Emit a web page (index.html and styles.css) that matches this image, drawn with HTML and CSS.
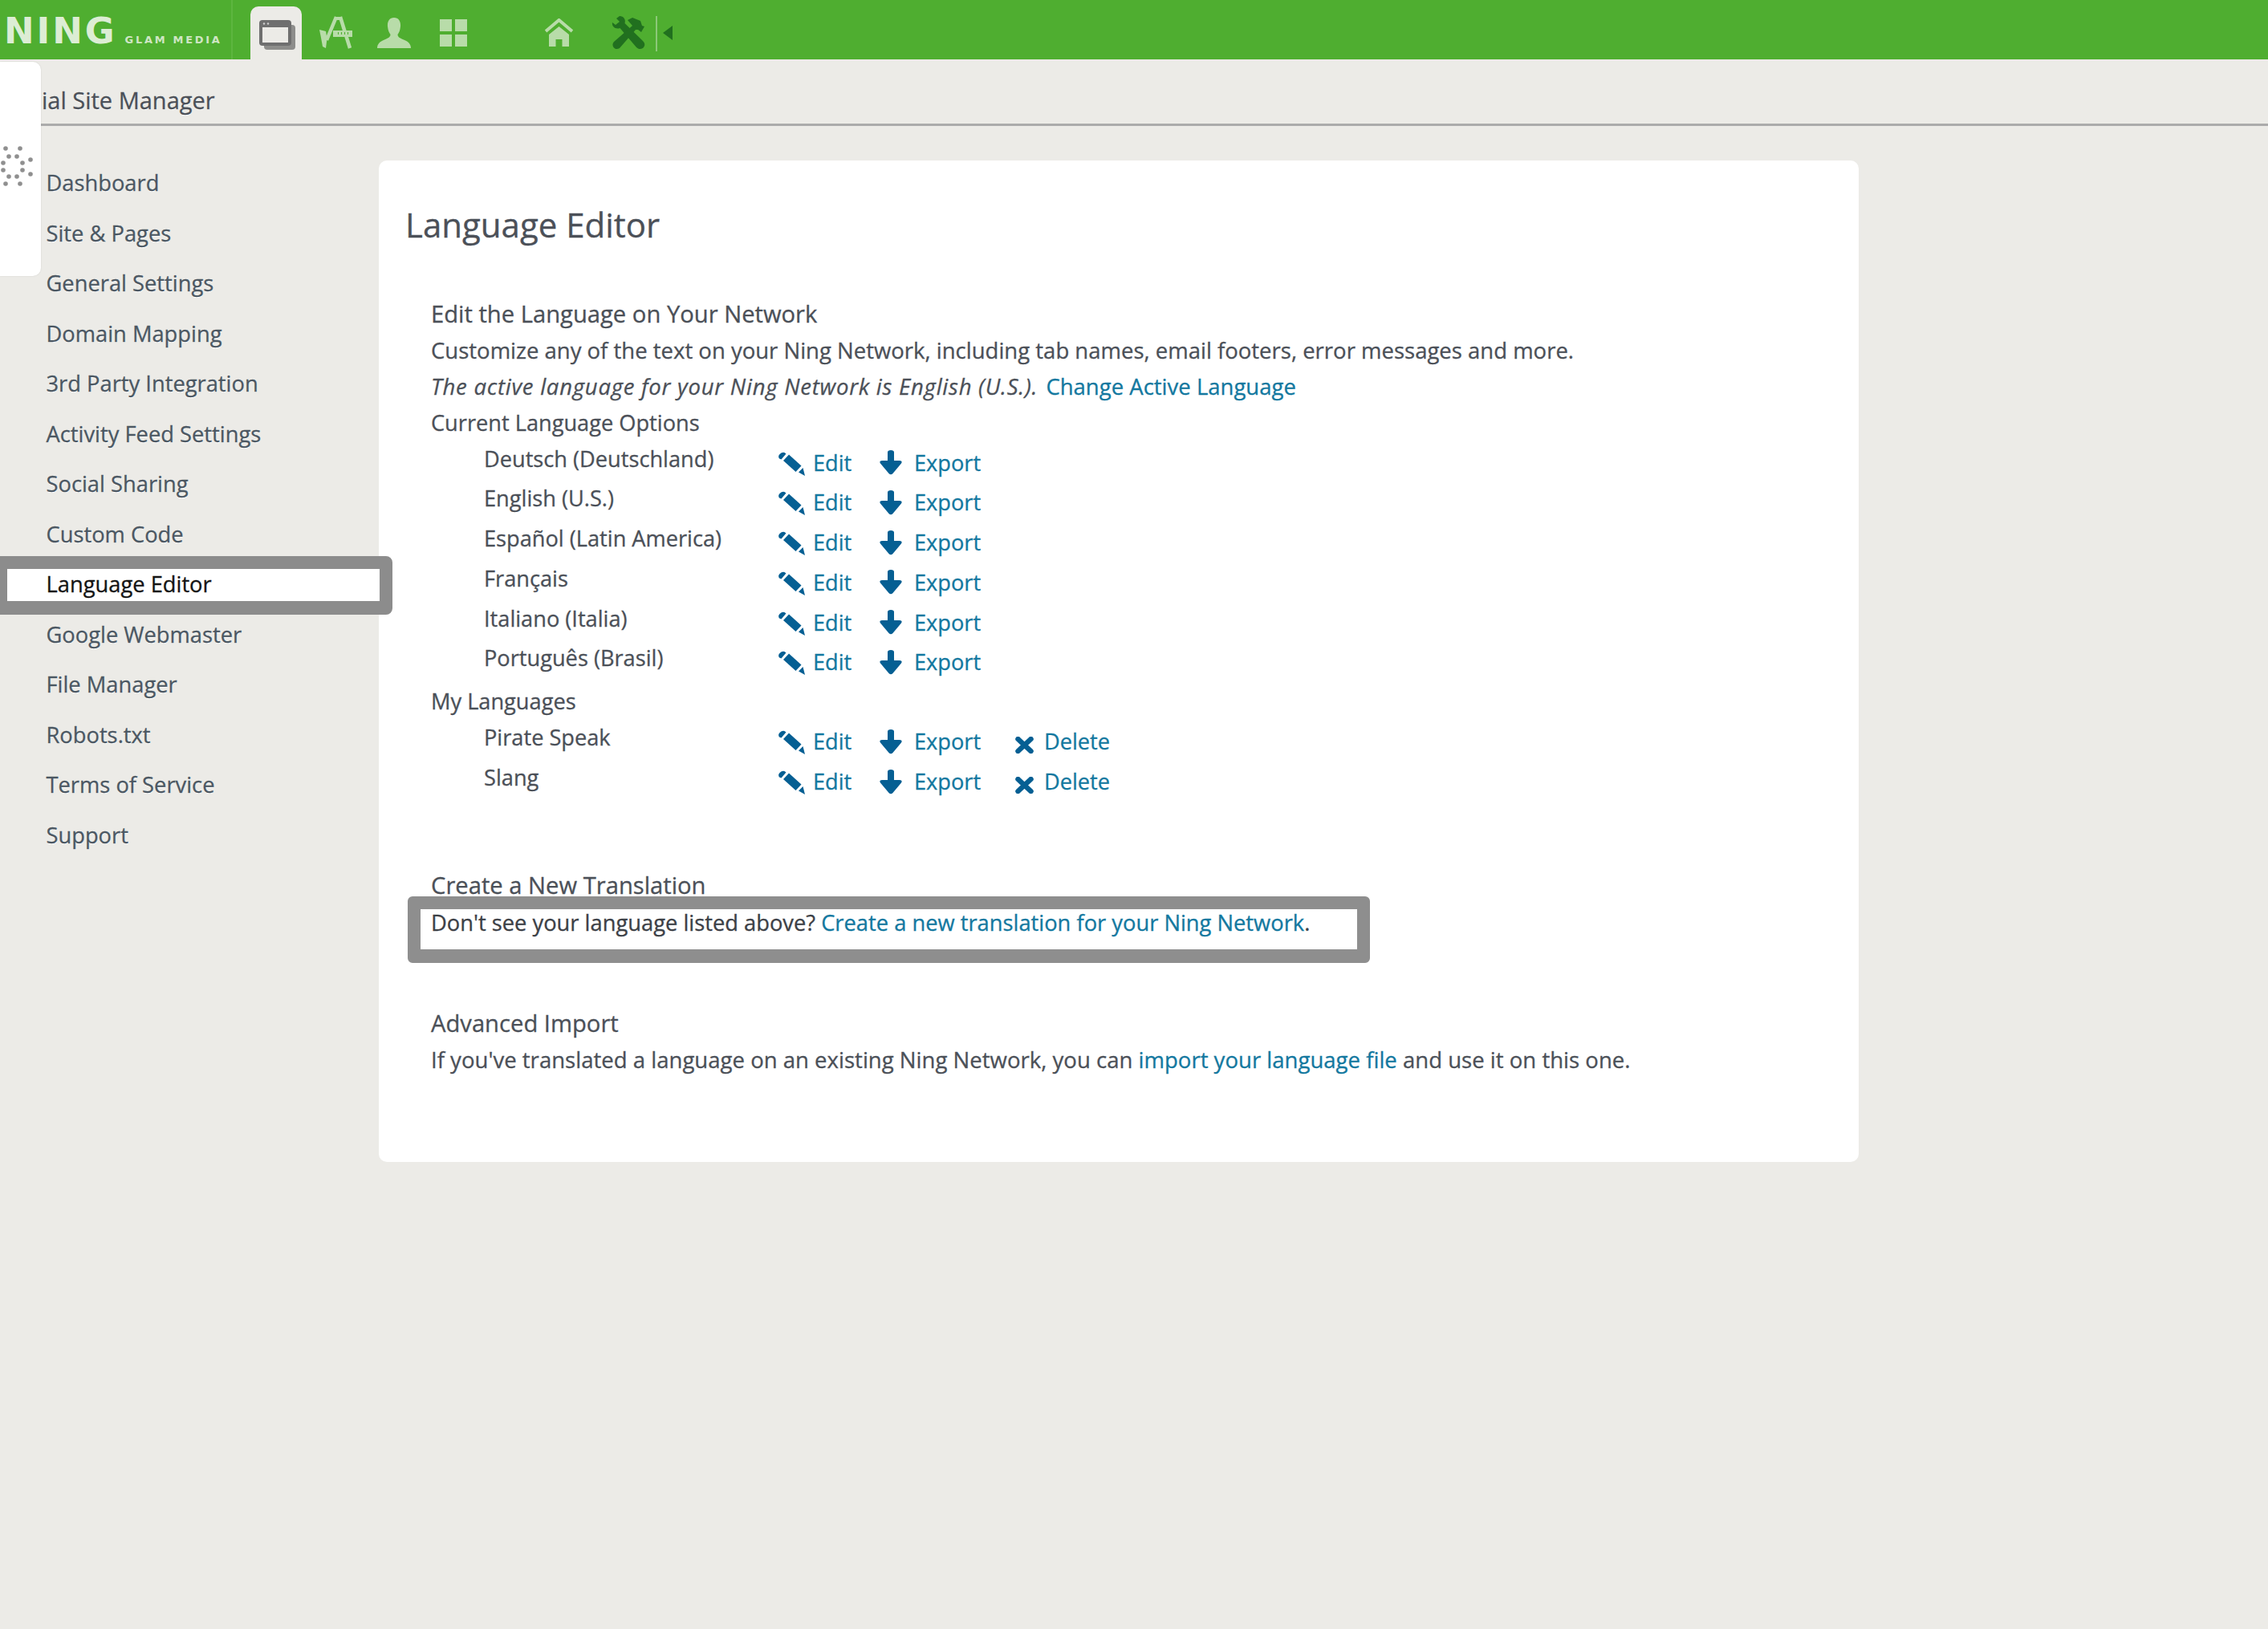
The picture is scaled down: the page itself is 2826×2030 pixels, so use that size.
FILE: index.html
```html
<!DOCTYPE html>
<html lang="en">
<head>
<meta charset="utf-8">
<title>Language Editor</title>
<link rel="stylesheet" href="styles.css">
</head>
<body>
<svg class="defs" width="0" height="0" aria-hidden="true">
  <symbol id="i-edit" viewBox="0 0 33 30">
    <path d="M1 8.500Q-1 5.500 1.500 3Q4.500 0 7.500 1L9.500 2.500L3.500 9.500Z"/>
    <path d="M6 11L13 3.500L28.500 17.500L21.500 25Z"/>
    <path d="M25 25.500L30.500 20L33 30Z"/>
  </symbol>
  <symbol id="i-export" viewBox="0 0 28 31">
    <path d="M10 2.500Q10 0 14 0Q18 0 18 2.500V13H25Q29 13 27 16.500L16.500 29Q14 31.500 11.500 29L1 16.500Q-1 13 3 13H10Z"/>
  </symbol>
  <symbol id="i-delete" viewBox="0 0 23 21">
    <path d="M3.500 3L19.500 18M19.500 3L3.500 18" fill="none" stroke="currentColor" stroke-width="6.500" stroke-linecap="round"/>
  </symbol>
</svg>

<header class="topbar">
  <div class="brand">
    <span class="brand-name">NING</span>
    <span class="brand-sub">GLAM MEDIA</span>
  </div>
  <nav class="tabs">
    <a class="tab tab-active">
      <svg class="ic-window" viewBox="0 0 45 37">
        <rect x="6" y="6" width="39" height="31" rx="4" fill="#8d8d8b"/>
        <rect x="0" y="0" width="40" height="32" rx="4" fill="#6f6f6f"/>
        <rect x="4" y="9" width="32" height="19" fill="#ecebe7"/>
        <circle cx="6" cy="4.500" r="1.200" fill="#cfcfcf"/>
        <circle cx="11" cy="4.500" r="1.200" fill="#cfcfcf"/>
      </svg>
    </a>
    <svg class="ic-app" viewBox="0 0 43 41">
      <path d="M22 1L10 30M27 1L39 40" fill="none" stroke="#b8dca9" stroke-width="4.500"/>
      <path d="M20 1H29V5H20Z" fill="#b8dca9"/>
      <path d="M18 18H42V26H18Z" fill="#b8dca9"/>
      <path d="M1 17L9 19L10.500 28L9 40L5 38L3 27Z" fill="#b8dca9"/>
      <path d="M24 20h1v3h-1zM28 20h1v3h-1zM32 20h1v3h-1zM36 20h1v3h-1z" fill="#4fae30"/>
    </svg>
    <svg class="ic-person" viewBox="0 0 42 38">
      <path d="M21 0C27 0 29.500 5 29 11C28.500 16 27 19 25.500 21C25.500 24 28 25.500 33 27.500C39 30 42 33 42 38H0C0 33 3 30 9 27.500C14 25.500 16.500 24 16.500 21C15 19 13.500 16 13 11C12.500 5 15 0 21 0Z" fill="#b8dca9"/>
    </svg>
    <svg class="ic-grid" viewBox="0 0 34 34">
      <path d="M0 0H15V15H0ZM19 0H34V15H19ZM0 19H15V34H0ZM19 19H34V34H19Z" fill="#b8dca9"/>
    </svg>
    <svg class="ic-home" viewBox="0 0 35 35">
      <path d="M1 16L17.500 2L34 16" fill="none" stroke="#b8dca9" stroke-width="4"/>
      <path d="M17.500 10L30 20V35H21.500V26H13.500V35H5V20Z" fill="#b8dca9"/>
    </svg>
    <svg class="ic-tools" viewBox="0 0 43 42">
      <path d="M1 8L5 11L10 7L6 3L10 0C15 0 18 4 16.500 9L39 31C42 34 42 37 39 40C36 42 33 41 31 39L10.500 15C5 17 0 13 1 8Z" fill="#21701f"/>
      <path d="M20 5L26 2L36 6L38 12L41 13L37 20L33 17L30 17L10 40C7 42 4 41 2.500 39C1 37 1 34 3 32L26 12Z" fill="#21701f"/>
    </svg>
    <span class="tab-rule"></span>
    <span class="tab-caret"></span>
  </nav>
</header>

<aside class="popup">
  <svg class="spinner" viewBox="0 0 42 50" fill="#8f8f8f">
    <circle cx="7" cy="3" r="2.800"/><circle cx="25" cy="3" r="2.800"/>
    <circle cx="11" cy="13" r="2.800"/><circle cx="21" cy="13" r="2.800"/>
    <circle cx="38" cy="17" r="2.800"/><circle cx="28" cy="21" r="2.800"/><circle cx="4" cy="21" r="2.800"/>
    <circle cx="4" cy="30" r="2.800"/><circle cx="28" cy="30" r="2.800"/><circle cx="38" cy="35" r="2.800"/>
    <circle cx="11" cy="38" r="2.800"/><circle cx="21" cy="38" r="2.800"/>
    <circle cx="7" cy="47" r="2.800"/><circle cx="25" cy="47" r="2.800"/>
  </svg>
</aside>

<div class="subhead">ial Site Manager</div>

<div class="layout">
  <ul class="sidenav">
    <li>Dashboard</li>
    <li>Site &amp; Pages</li>
    <li>General Settings</li>
    <li>Domain Mapping</li>
    <li>3rd Party Integration</li>
    <li>Activity Feed Settings</li>
    <li>Social Sharing</li>
    <li>Custom Code</li>
    <li class="active"><span>Language Editor</span></li>
    <li>Google Webmaster</li>
    <li>File Manager</li>
    <li>Robots.txt</li>
    <li>Terms of Service</li>
    <li>Support</li>
  </ul>

  <main class="panel">
    <h1 class="title">Language Editor</h1>
    <section class="body">
      <h2 class="line head">Edit the Language on Your Network</h2>
      <p class="line">Customize any of the text on your Ning Network, including tab names, email footers, error messages and more.</p>
      <p class="line"><em class="active-lang">The active language for your Ning Network is English (U.S.).</em> <a class="link">Change Active Language</a></p>
      <h3 class="line sub">Current Language Options</h3>
      <div class="langs">
        <div class="lang"><span class="lang-name">Deutsch (Deutschland)</span><div class="acts"><a class="act act-edit"><svg><use href="#i-edit"/></svg>Edit</a><a class="act act-export"><svg><use href="#i-export"/></svg>Export</a></div></div>
        <div class="lang"><span class="lang-name">English (U.S.)</span><div class="acts"><a class="act act-edit"><svg><use href="#i-edit"/></svg>Edit</a><a class="act act-export"><svg><use href="#i-export"/></svg>Export</a></div></div>
        <div class="lang"><span class="lang-name">Español (Latin America)</span><div class="acts"><a class="act act-edit"><svg><use href="#i-edit"/></svg>Edit</a><a class="act act-export"><svg><use href="#i-export"/></svg>Export</a></div></div>
        <div class="lang"><span class="lang-name">Français</span><div class="acts"><a class="act act-edit"><svg><use href="#i-edit"/></svg>Edit</a><a class="act act-export"><svg><use href="#i-export"/></svg>Export</a></div></div>
        <div class="lang"><span class="lang-name">Italiano (Italia)</span><div class="acts"><a class="act act-edit"><svg><use href="#i-edit"/></svg>Edit</a><a class="act act-export"><svg><use href="#i-export"/></svg>Export</a></div></div>
        <div class="lang"><span class="lang-name">Português (Brasil)</span><div class="acts"><a class="act act-edit"><svg><use href="#i-edit"/></svg>Edit</a><a class="act act-export"><svg><use href="#i-export"/></svg>Export</a></div></div>
      </div>
      <h3 class="line sub my-head">My Languages</h3>
      <div class="langs">
        <div class="lang"><span class="lang-name">Pirate Speak</span><div class="acts"><a class="act act-edit"><svg><use href="#i-edit"/></svg>Edit</a><a class="act act-export"><svg><use href="#i-export"/></svg>Export</a><a class="act act-delete"><svg><use href="#i-delete"/></svg>Delete</a></div></div>
        <div class="lang"><span class="lang-name">Slang</span><div class="acts"><a class="act act-edit"><svg><use href="#i-edit"/></svg>Edit</a><a class="act act-export"><svg><use href="#i-export"/></svg>Export</a><a class="act act-delete"><svg><use href="#i-delete"/></svg>Delete</a></div></div>
      </div>
      <h2 class="line head create-head">Create a New Translation</h2>
      <p class="callout">Don't see your language listed above? <a class="link">Create a new translation for your Ning Network</a>.</p>
      <h2 class="line head adv-head">Advanced Import</h2>
      <p class="line last-line">If you've translated a language on an existing Ning Network, you can <a class="link">import your language file</a> and use it on this one.</p>
    </section>
  </main>
</div>
</body>
</html>
```

FILE: styles.css
```css
*, *::before { box-sizing: border-box; }
html, body { margin: 0; padding: 0; }
body {
  width: 2826px;
  min-height: 2030px;
  background: #ecebe7;
  color: #4b5058;
  font-family: "Open Sans", "Liberation Sans", sans-serif;
  font-size: 27.500px;
  -webkit-text-stroke: 0.3px;
  position: relative;
  overflow: hidden;
}
.defs { position: absolute; }

.topbar {
  height: 74px;
  background: #4fae30;
  display: flex;
  align-items: stretch;
}
.brand {
  width: 290px;
  flex: none;
  border-right: 2px solid #5db53f;
  padding-left: 5px;
  display: flex;
  align-items: baseline;
  font-family: "DejaVu Sans", sans-serif;
  font-weight: 700;
  -webkit-text-stroke: 0;
}
.brand-name {
  font-size: 45px;
  line-height: 78px;
  letter-spacing: 2.900px;
  color: #dcedd4;
}
.brand-sub {
  margin-left: 10px;
  font-size: 13px;
  letter-spacing: 2.700px;
  color: #cfe6c4;
  white-space: nowrap;
}
.tabs { display: flex; align-items: flex-start; margin-left: 22px; }
.tab {
  width: 64px;
  height: 66px;
  margin-top: 8px;
  background: #ecebe7;
  border-radius: 10px 10px 0 0;
  padding: 17px 0 0 11px;
}
.ic-window { display: block; width: 45px; height: 37px; }
.ic-app { width: 43px; height: 41px; margin: 20px 0 0 21px; }
.ic-person { width: 42px; height: 38px; margin: 22px 0 0 30px; }
.ic-grid { width: 34px; height: 34px; margin: 24px 0 0 36px; }
.ic-home { width: 35px; height: 35px; margin: 23px 0 0 97px; }
.ic-tools { width: 43px; height: 42px; margin: 20px 0 0 48px; }
.tab-rule { width: 2px; height: 44px; margin: 20px 0 0 12px; background: #8cc878; }
.tab-caret {
  margin: 32px 0 0 7px;
  border-style: solid;
  border-width: 9.500px 12px 9.500px 0;
  border-color: transparent #21701f transparent transparent;
}

.popup {
  position: absolute;
  left: 0;
  top: 77px;
  width: 51px;
  height: 267px;
  background: #fff;
  border-radius: 0 10px 10px 0;
  box-shadow: 0 0 2px rgba(0,0,0,.12);
  z-index: 5;
}
.spinner { display: block; width: 42px; height: 50px; margin-top: 105px; }

.subhead {
  height: 83px;
  padding: 29px 0 0 52px;
  font-size: 29px;
  line-height: 44px;
  border-bottom: 3px solid #ababab;
  text-shadow: 0 1px 0 #fff;
}

.layout { display: flex; align-items: flex-start; padding-top: 43px; }

.sidenav {
  list-style: none;
  width: 472px;
  flex: none;
  margin: -3px 0 0;
  padding: 0 0 0 57.500px;
  font-size: 27.300px;
  color: #4b5762;
  position: relative;
  z-index: 2;
}
.sidenav li {
  height: 62.500px;
  line-height: 62.500px;
  text-shadow: 0 1px 0 #fff;
  position: relative;
}
.sidenav .active { color: #141414; text-shadow: none; }
.sidenav .active::before {
  content: "";
  position: absolute;
  left: -57.500px;
  right: -17px;
  top: -4px;
  height: 73px;
  background: #fff;
  border: solid #8c8c8c;
  border-width: 16px 16px 17px 9px;
  border-radius: 0 8px 8px 0;
}
.sidenav .active span { position: relative; }

.panel {
  width: 1844px;
  flex: none;
  background: #fff;
  border-radius: 10px;
  padding: 50px 0 105px 33px;
}
.title {
  margin: 0;
  font-size: 42px;
  line-height: 60px;
  font-weight: 400;
  color: #4b5058;
}
.body { margin: 58.500px 0 0 32px; }
.line {
  margin: 0;
  font-size: 27.500px;
  line-height: 45px;
  font-weight: 400;
  white-space: nowrap;
}
.head { font-size: 29.200px; }
.sub { font-size: 27.200px; }
.active-lang { letter-spacing: 0.750px; margin-right: 3px; }
.last-line { font-size: 27.550px; }
.link { color: #13789f; }

.lang {
  display: grid;
  grid-template-columns: 367px 1fr;
  height: 49.800px;
  padding-left: 66px;
  font-size: 27.200px;
  line-height: 45px;
  white-space: nowrap;
}
.acts { display: flex; padding-top: 5px; color: #13789f; }
.act { display: flex; align-items: center; height: 45px; }
.act svg { fill: #055f93; color: #055f93; flex: none; }
.act-edit { width: 126px; }
.act-edit svg { width: 33px; height: 30px; margin: 3px 10px 0 0; }
.act-export { width: 167px; }
.act-export svg { width: 28px; height: 31px; margin: 1px 15px 0 0; }
.act-delete svg { width: 23px; height: 21px; margin: 9px 13px 0 2px; }

.my-head { margin-top: 4px; }
.create-head { margin-top: 85px; }
.callout {
  width: 1199px;
  height: 83px;
  margin: -9px 0 0 -29px;
  padding: 0 0 0 13px;
  border: solid #8e8e8e;
  border-width: 16px 16px 17px;
  border-radius: 6px;
  font-size: 27.300px;
  line-height: 34px;
  color: #3c4046;
  white-space: nowrap;
}
.adv-head { margin-top: 53px; }
```
